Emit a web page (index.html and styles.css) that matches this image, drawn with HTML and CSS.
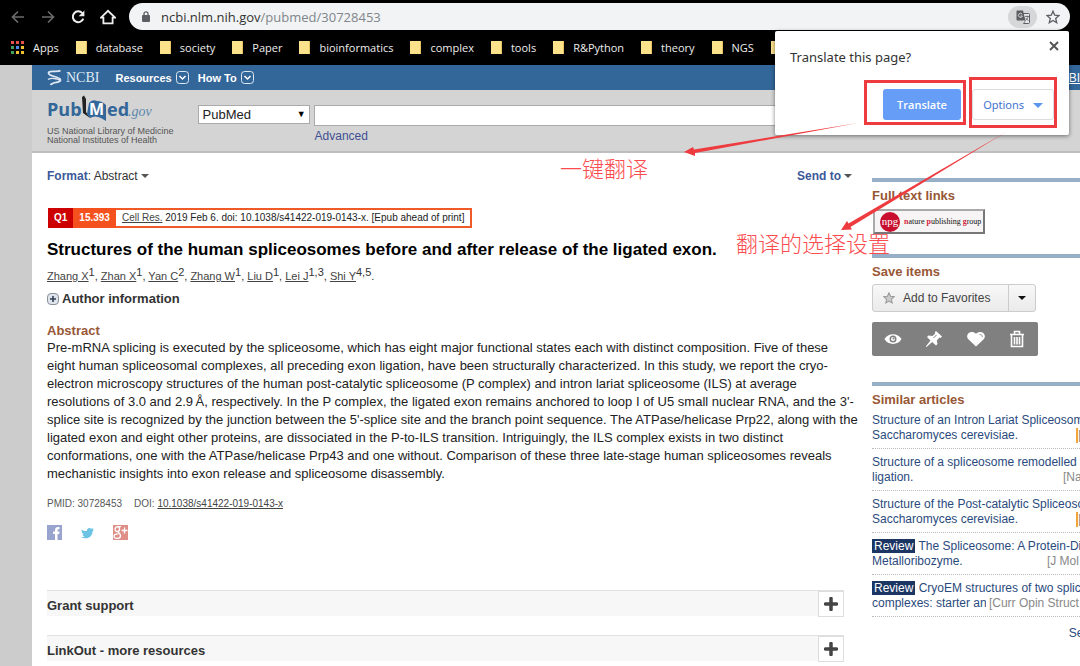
FILE: index.html
```html
<!DOCTYPE html>
<html lang="en">
<head>
    <meta charset="UTF-8">
    <meta name="viewport" content="width=device-width, initial-scale=1.0">
    <title>Structures of the human spliceosomes - PubMed - NCBI</title>
    <link rel="stylesheet" href="styles.css">
</head>
<body>
    <div class="browser">
        <div class="toolbar">
            <button class="tool" aria-label="Back"><svg width="14" height="14" viewBox="0 0 14 14"><path d="M13 7H2M7 1.5L1.5 7L7 12.5" stroke="#6b6b6b" stroke-width="1.7" fill="none"/></svg></button>
            <button class="tool" aria-label="Forward"><svg width="14" height="14" viewBox="0 0 14 14"><path d="M1 7H12M7 1.5L12.5 7L7 12.5" stroke="#6b6b6b" stroke-width="1.7" fill="none"/></svg></button>
            <button class="tool" aria-label="Reload"><svg width="14" height="14" viewBox="0 0 14 14"><path d="M11.3 3.2A5.4 5.4 0 1 0 12.3 8.6" stroke="#eee" stroke-width="2" fill="none"/><path d="M13.4 0.5V6.3H7.6Z" fill="#eee"/></svg></button>
            <button class="tool" aria-label="Home"><svg width="16" height="16" viewBox="0 0 16 16"><path d="M1 8.6L8 1.8L15 8.6H12.6V14.4H3.4V8.6Z" stroke="#eee" stroke-width="1.8" fill="none"/></svg></button>
            <div class="omnibox">
                <svg width="8" height="11" viewBox="0 0 8 11"><rect y="4" width="8" height="7" rx="1" fill="#5a5d61"/><path d="M2 4.500V2.800a2 2 0 0 1 4 0V4.500" stroke="#5a5d61" stroke-width="1.3" fill="none"/></svg>
                <a class="url" href="#"><span>ncbi.nlm.nih.gov</span>/pubmed/30728453</a>
                <button class="translate-icon" aria-label="Translate this page">
                    <svg width="14" height="14" viewBox="0 0 14 14"><path d="M6 3.500H12.500a1 1 0 0 1 1 1V12.500a1 1 0 0 1-1 1H7.500" fill="#e4e6e8" stroke="#5a5d61"/><path d="M1 0.500H7L9.500 10.500H1.500a1 1 0 0 1-1-1V1.500a1 1 0 0 1 .5-1Z" fill="#5a5d61"/><path d="M6.200 4.300A2 2 0 1 0 6.400 6H4.500" stroke="#dadada" fill="none"/><path d="M9 6.500H13M11 5.500V6.500M12.300 6.500Q11.500 9 9.500 10.300M9.800 8Q10.800 9.600 12.500 10.500M7.500 13.500L9.500 10.500" stroke="#5a5d61" stroke-width=".8" fill="none"/></svg>
                </button>
                <button class="star" aria-label="Bookmark this page">
                    <svg width="14" height="14" viewBox="0 0 14 14"><path d="M7 1.200L8.700 5.200L13 5.600L9.700 8.400L10.700 12.700L7 10.400L3.300 12.700L4.300 8.400L1 5.600L5.300 5.200Z" fill="none" stroke="#5a5d61" stroke-width="1.300"/></svg>
                </button>
            </div>
        </div>
        <nav class="bookmarks">
            <a href="#" class="apps">
                <svg width="13" height="13" viewBox="0 0 13 13"><path d="M0 0h3v3H0zM5 0h3v3H5zM10 0h3v3h-3z" fill="#e0524a"/><path d="M0 5h3v3H0z" fill="#3fa35a"/><path d="M5 5h3v3H5z" fill="#4b8bf0"/><path d="M10 5h3v3h-3z" fill="#f1c232"/><path d="M0 10h3v3H0z" fill="#3fa35a"/><path d="M5 10h3v3H5zM10 10h3v3h-3z" fill="#f1c232"/></svg>
                Apps
            </a>
            <a href="#"><i class="folder"></i>database</a>
            <a href="#"><i class="folder"></i>society</a>
            <a href="#"><i class="folder"></i>Paper</a>
            <a href="#"><i class="folder"></i>bioinformatics</a>
            <a href="#"><i class="folder"></i>complex</a>
            <a href="#"><i class="folder"></i>tools</a>
            <a href="#"><i class="folder"></i>R&amp;Python</a>
            <a href="#"><i class="folder"></i>theory</a>
            <a href="#"><i class="folder"></i>NGS</a>
            <a href="#" aria-label="More"><i class="folder"></i></a>
        </nav>
    </div>

    <div class="page">
        <div class="ncbi-bar">
            <a href="#" class="ncbi">
                <svg width="15" height="17" viewBox="0 0 15 17"><path d="M13.500 1.500C10 4 2 .5 1.500 4C1.500 8 13.500 7 13.500 11C13.500 14.500 6 12 3.500 16" stroke="#dfe9f3" stroke-width="1.800" fill="none"/><path d="M1 10.500C4 8.500 10 9.500 13 11" stroke="#dfe9f3" stroke-width="1.500" fill="none"/></svg>
                NCBI
            </a>
            <button class="menu">Resources <svg width="13" height="13" viewBox="0 0 13 13"><rect x=".5" y=".5" width="12" height="12" rx="3" fill="none" stroke="#dfe9f3"/><path d="M3.500 5L6.500 8L9.500 5" stroke="#fff" stroke-width="1.500" fill="none"/></svg></button>
            <button class="menu">How To <svg width="13" height="13" viewBox="0 0 13 13"><rect x=".5" y=".5" width="12" height="12" rx="3" fill="none" stroke="#dfe9f3"/><path d="M3.500 5L6.500 8L9.500 5" stroke="#fff" stroke-width="1.500" fill="none"/></svg></button>
            <a href="#" class="signin">Sign in to NCBI</a>
        </div>

        <header class="header">
            <a href="#" class="logo">
                <svg width="106" height="28" viewBox="0 0 106 28">
                    <path d="M35 2L37 .5L39 4V17L43 23L36 18Z" fill="#222"/>
                    <path d="M40 19L42 8Q45 4 50 6Q55 6 59 10V26L54 23Q48 20 43 23Z" fill="#336699"/>
                    <text x="0" y="21" class="logo-text">Pub</text>
                    <text x="42" y="20" class="logo-m">M</text>
                    <text x="60" y="21" class="logo-text">ed</text>
                    <text x="81" y="21" class="logo-gov">.gov</text>
                </svg>
                <span>US National Library of Medicine</span>
                <span>National Institutes of Health</span>
            </a>
            <form class="search">
                <label class="select-wrap">
                    <select aria-label="Database"><option>PubMed</option></select>
                </label>
                <div class="term">
                    <input type="text" aria-label="Search term">
                    <a href="#">Advanced</a>
                </div>
            </form>
        </header>

        <div class="columns">
            <main class="article">
                <div class="display-bar">
                    <button class="link-button"><span><b>Format</b>: Abstract</span><i class="caret"></i></button>
                    <button class="link-button"><b>Send to</b><i class="caret"></i></button>
                </div>

                <div class="citation">
                    <b class="quartile">Q1</b><b class="factor">15.393</b>
                    <span class="source"><a href="#">Cell Res.</a> 2019 Feb 6. doi: 10.1038/s41422-019-0143-x. [Epub ahead of print]</span>
                </div>

                <h1>Structures of the human spliceosomes before and after release of the ligated exon.</h1>
                <div class="authors"><a href="#">Zhang X</a><sup>1</sup>, <a href="#">Zhan X</a><sup>1</sup>, <a href="#">Yan C</a><sup>2</sup>, <a href="#">Zhang W</a><sup>1</sup>, <a href="#">Liu D</a><sup>1</sup>, <a href="#">Lei J</a><sup>1,3</sup>, <a href="#">Shi Y</a><sup>4,5</sup>.</div>
                <button class="author-info">
                    <svg width="12" height="12" viewBox="0 0 12 12"><rect x=".5" y=".5" width="11" height="11" rx="3.500" fill="#dfe3ea" stroke="#8b929c"/><path d="M6 3V9M3 6H9" stroke="#333f55" stroke-width="1.600"/></svg>
                    Author information
                </button>

                <h2>Abstract</h2>
                <p>Pre-mRNA splicing is executed by the spliceosome, which has eight major functional states each with distinct composition. Five of these<br>
                eight human spliceosomal complexes, all preceding exon ligation, have been structurally characterized. In this study, we report the cryo-<br>
                electron microscopy structures of the human post-catalytic spliceosome (P complex) and intron lariat spliceosome (ILS) at average<br>
                resolutions of 3.0 and 2.9&#8201;Å, respectively. In the P complex, the ligated exon remains anchored to loop I of U5 small nuclear RNA, and the 3'-<br>
                splice site is recognized by the junction between the 5'-splice site and the branch point sequence. The ATPase/helicase Prp22, along with the<br>
                ligated exon and eight other proteins, are dissociated in the P-to-ILS transition. Intriguingly, the ILS complex exists in two distinct<br>
                conformations, one with the ATPase/helicase Prp43 and one without. Comparison of these three late-stage human spliceosomes reveals<br>
                mechanistic insights into exon release and spliceosome disassembly.</p>

                <div class="ids"><span>PMID: 30728453</span><span>DOI: <a href="#">10.1038/s41422-019-0143-x</a></span></div>
                <div class="social">
                    <a href="#" aria-label="Facebook"><svg width="15" height="15" viewBox="0 0 15 15"><path d="M0 0h15v15H0z" fill="#98a4cd"/><path d="M8 15V9H6V6.500H8V5C8 3 9.200 2 11 2H12.500V4.300H11.300C10.700 4.300 10.500 4.700 10.500 5.200V6.500H12.500L12.200 9H10.500V15Z" fill="#fff"/></svg></a>
                    <a href="#" aria-label="Twitter"><svg width="15" height="15" viewBox="0 0 15 15"><path d="M1.500 4.500C3.500 6 5.500 6.300 7 6C6.500 3.500 9.500 2 11.300 3.800L13.500 3.200L12.600 4.800L14 4.700L12.600 6.200C12.500 12 7 15 1 12.200C2.800 12.300 4 11.900 4.600 11.300C3.200 11 2.600 10.200 2.500 9.400L3.600 9.300C2.200 8.500 1.600 7 1.500 4.500Z" fill="#6cc3e3"/></svg></a>
                    <a href="#" aria-label="Google Plus"><svg width="15" height="15" viewBox="0 0 15 15"><path d="M0 0h15v15H0z" fill="#df8f88"/><path d="M8 1.700H4.800C1.500 1.700 1 6.500 4.300 6.500C7.300 6.500 7.200 2.500 5 1.700M4.500 6.500C6 8 7.500 8.500 7.500 10.800C7.500 14.200 1 14.300 1 11.300C1 9.500 3 8.800 5.500 8.800M11.500 2.500V8.500M8.700 5.500H14.500" fill="none" stroke="#fff" stroke-width="1.300"/></svg></a>
                </div>

                <section class="fold">
                    <h3>Grant support</h3>
                    <button aria-label="Show grant support"><svg width="14" height="14" viewBox="0 0 14 14"><path d="M7 1.500V12.500M1.500 7H12.500" stroke="#444" stroke-width="3.500" stroke-linecap="round"/></svg></button>
                </section>
                <section class="fold">
                    <h3>LinkOut - more resources</h3>
                    <button aria-label="Show more resources"><svg width="14" height="14" viewBox="0 0 14 14"><path d="M7 1.500V12.500M1.500 7H12.500" stroke="#444" stroke-width="3.500" stroke-linecap="round"/></svg></button>
                </section>
            </main>

            <aside class="sidebar">
                <section class="portlet">
                    <h3>Full text links</h3>
                    <a href="#" class="npg">
                        <svg width="20" height="20" viewBox="0 0 20 20"><circle cx="10" cy="10" r="10" fill="#c8102e"/><text x="10" y="13" text-anchor="middle" class="npg-mark">npg</text></svg>
                        <span><em>n</em>ature <em>p</em>ublishing <em>g</em>roup</span>
                    </a>
                </section>

                <section class="portlet">
                    <h3>Save items</h3>
                    <div class="favorites">
                        <button><svg width="12" height="12" viewBox="0 0 14 14"><path d="M7 1L8.800 5L13 5.500L9.800 8.400L10.700 12.700L7 10.500L3.300 12.700L4.200 8.400L1 5.500L5.200 5Z" fill="#ccc" stroke="#999" stroke-width="1.200"/></svg>Add to Favorites</button>
                        <button class="drop" aria-label="More collections"><i class="caret"></i></button>
                    </div>
                    <div class="actions">
                        <button aria-label="View"><svg width="18" height="18" viewBox="0 0 18 18"><path d="M.5 9C4 2.500 14 2.500 17.500 9C14 15.500 4 15.500 .5 9Z" fill="#fff"/><circle cx="9" cy="9" r="3.500" fill="#808080"/><circle cx="9" cy="9" r="2" fill="#fff"/><circle cx="9.500" cy="8.500" r="1" fill="#808080"/></svg></button>
                        <button aria-label="Pin"><svg width="18" height="18" viewBox="0 0 18 18"><path d="M11 1L17 6.500L15.500 8L14.500 7.600L11.800 10.500L12.500 14L11 15.500L7.200 12L1.500 17L.8 16.400L5.500 10.500L2 7L3.500 5.500L7.500 6L10.300 3.300L9.800 2.200Z" fill="#fff"/><path d="M8.500 8L11.500 5" stroke="#808080"/></svg></button>
                        <button aria-label="Like"><svg width="18" height="18" viewBox="0 0 18 18"><path d="M9 16.500L1.800 9.800C.6 8.600 0 7.500 .2 5.800C.6 2.200 5.500 .2 9 3.800C12.500 .2 17.400 2.200 17.800 5.800C18 7.500 17.400 8.600 16.200 9.800Z" fill="#fff"/><path d="M12.500 4.200Q15.300 4.200 15.500 7.200" stroke="#999" fill="none"/></svg></button>
                        <button aria-label="Delete"><svg width="18" height="18" viewBox="0 0 18 18"><path d="M2 4.500H16M6.500 4V1.500H11.500V4M3.500 5V16.500H14.500V5M6.500 7V14.500M9 7V14.500M11.500 7V14.500" stroke="#fff" stroke-width="1.600" fill="none"/></svg></button>
                    </div>
                </section>

                <section class="portlet">
                    <h3>Similar articles</h3>
                    <ul>
                        <li>
                            <a href="#">Structure of an Intron Lariat Spliceosome from</a>
                            <div><a href="#">Saccharomyces cerevisiae.</a><span class="free">[Cell. 2017]</span></div>
                        </li>
                        <li>
                            <a href="#">Structure of a spliceosome remodelled for exon</a>
                            <div><a href="#">ligation.</a><span>[Nature. 2017]</span></div>
                        </li>
                        <li>
                            <a href="#">Structure of the Post-catalytic Spliceosome from</a>
                            <div><a href="#">Saccharomyces cerevisiae.</a><span class="free">[Cell. 2017]</span></div>
                        </li>
                        <li>
                            <a href="#"><b>Review</b> The Spliceosome: A Protein-Directed</a>
                            <div><a href="#">Metalloribozyme.</a><span>[J Mol Biol. 2017]</span></div>
                        </li>
                        <li>
                            <a href="#"><b>Review</b> CryoEM structures of two spliceosomal</a>
                            <div><a href="#">complexes: starter and</a><span>[Curr Opin Struct Biol. 2016]</span></div>
                        </li>
                    </ul>
                    <a href="#" class="more">See reviews...</a>
                </section>
            </aside>
        </div>
    </div>

    <div class="popup" role="dialog" aria-label="Translate">
        <button class="close" aria-label="Close"><svg width="10" height="10" viewBox="0 0 10 10"><path d="M1 1L9 9M9 1L1 9" stroke="#555" stroke-width="1.900"/></svg></button>
        <p>Translate this page?</p>
        <div class="popup-buttons">
            <button class="primary">Translate</button>
            <button class="options">Options <i class="caret"></i></button>
        </div>
    </div>

    <svg class="marks" width="1080" height="260" viewBox="0 0 1080 260">
        <g fill="none" stroke="#ee3b3f" stroke-width="3">
            <rect x="865.500" y="81.500" width="99" height="42"/>
            <rect x="970.500" y="78.500" width="85" height="48"/>
        </g>
        <g fill="#ee3b3f">
            <path d="M684 152L693 147L694 149.500L858 123L695 153L695 156Z"/>
            <path d="M841 230L847 221L848.500 223.500L1006 132L850.500 227L852 229.500Z"/>
        </g>
    </svg>
    <div class="note note-translate" lang="zh">一键翻译</div>
    <div class="note note-options" lang="zh">翻译的选择设置</div>
</body>
</html>
```
FILE: styles.css
```css
* {
    box-sizing: border-box;
}

body {
    position: relative;
    margin: 0;
    min-height: 100vh;
    overflow: hidden;
    background-color: #ccc;
    font-family: "Liberation Sans", Arial, sans-serif;
    font-size: 13px;
    color: #333;
}

button {
    padding: 0;
    border: none;
    background: none;
    font: inherit;
    color: inherit;
    cursor: pointer;
}

svg {
    display: block;
    flex: none;
}

h1, h2, h3, p, ul {
    margin: 0;
    padding: 0;
}

.caret {
    display: inline-block;
    border: 4px solid transparent;
    border-top-color: #555;
    border-bottom: none;
}

/* browser chrome */
.browser {
    background-color: #000;
    font-family: "Open Sans", "Noto Sans", sans-serif;
}

.toolbar {
    display: flex;
    align-items: center;
    gap: 14px;
    height: 31px;
    padding: 3px 10px 1px;
}

.tool {
    width: 16px;
    display: flex;
    justify-content: center;
}

.omnibox {
    flex: 1;
    display: flex;
    align-items: center;
    height: 27px;
    margin-left: -1px;
    padding: 0 10px 0 13px;
    border-radius: 14px;
    background-color: #f1f3f4;
}

.url {
    flex: 1;
    margin-left: 11px;
    font-size: 13px;
    color: #80868b;
    text-decoration: none;
}

.url span {
    color: #333;
}

.translate-icon {
    display: flex;
    align-items: center;
    justify-content: center;
    width: 29px;
    height: 22px;
    border-radius: 11px;
    background-color: #d5d7d9;
}

.star {
    margin-left: 9px;
}

.bookmarks {
    display: flex;
    align-items: center;
    gap: 17px;
    height: 34px;
    padding: 0 11px 2px;
    font-size: 11px;
    white-space: nowrap;
}

.bookmarks a {
    display: flex;
    align-items: center;
    gap: 9px;
    color: #eee;
    text-decoration: none;
}

.folder {
    width: 11px;
    height: 13px;
    background-color: #fde28c;
    border-right: 1px solid #e6c35c;
}

/* page */
.page {
    margin-left: 32px;
    background-color: #fff;
}

.ncbi-bar {
    display: flex;
    align-items: center;
    gap: 9px;
    height: 25px;
    padding-left: 15px;
    background-color: #336699;
    color: #fff;
    font-size: 12px;
}

.ncbi {
    display: flex;
    align-items: center;
    gap: 4px;
    margin-right: 7px;
    font-family: "Liberation Serif", serif;
    font-size: 14px;
    color: #dfe9f3;
    text-decoration: none;
}

.menu {
    display: flex;
    align-items: center;
    gap: 4px;
    font-size: 11px;
    font-weight: bold;
}

.signin {
    margin-left: auto;
    color: #fff;
}

.header {
    display: flex;
    gap: 24px;
    height: 63px;
    padding: 5px 40px 0 15px;
    background-color: #d4d4d4;
    border-bottom: 2px solid #bebebe;
}

.logo {
    display: flex;
    flex-direction: column;
    font-size: 9px;
    line-height: 9px;
    color: #555;
    text-decoration: none;
    white-space: nowrap;
}

.logo svg {
    margin-bottom: 4px;
}

.logo-text, .logo-m {
    font: bold 18px "Open Sans", sans-serif;
    fill: #336699;
}

.logo-m {
    font-size: 16px;
    fill: #fff;
}

.logo-gov {
    font: italic 14px "Liberation Serif", serif;
    fill: #5c87ad;
}

.search {
    flex: 1;
    display: flex;
    gap: 4px;
    margin-top: 10px;
}

.select-wrap {
    position: relative;
    height: 19px;
}

.select-wrap::after {
    content: "▼";
    position: absolute;
    right: 4px;
    top: 4px;
    font-size: 9px;
    color: #000;
    pointer-events: none;
}

.select-wrap select {
    appearance: none;
    width: 112px;
    height: 19px;
    padding: 0 4px;
    border: 1px solid #aaa;
    border-radius: 0;
    background-color: #fff;
    font: 13px "Liberation Sans", sans-serif;
    color: #222;
}

.term {
    flex: 1;
    display: flex;
    flex-direction: column;
    gap: 1px;
}

.term input {
    height: 21px;
    border: 1px solid #aaa;
    font: inherit;
}

.term a {
    align-self: flex-start;
    margin-left: 1px;
    font-size: 12px;
    line-height: 18px;
    color: #3f4f93;
    text-decoration: none;
}

/* the right-hand portlets run past a narrow window */
.columns {
    display: grid;
    grid-template-columns: minmax(0, 1fr) 272px;
    gap: 28px;
    margin-right: -64px;
    padding-left: 15px;
    min-height: calc(100vh - 153px);
    background-color: #fff;
}

.display-bar {
    display: flex;
    justify-content: space-between;
    margin-top: 14px;
    font-size: 12px;
}

.display-bar .link-button {
    display: flex;
    align-items: center;
    gap: 3px;
    line-height: 18px;
}

.display-bar .link-button:last-child {
    margin-right: -8px;
}

.link-button b {
    color: #3b5998;
}

.citation {
    display: flex;
    width: fit-content;
    margin: 23px 0 0 1px;
    border: 2px solid #f05a28;
    font-size: 10px;
    line-height: 16px;
}

.quartile, .factor {
    margin: -2px 0;
    padding: 2px 6px;
    background-color: #f4511e;
    color: #fff;
}

.quartile {
    margin-left: -2px;
    background-color: #cc0000;
}

.source {
    padding: 0 6px;
    color: #222;
}

.source a, .authors a, .ids a {
    color: #444;
}

h1 {
    margin-top: 11px;
    font-size: 17px;
    line-height: 22px;
    color: #000;
}

.authors {
    margin-top: 7px;
    font-size: 11px;
    line-height: 16px;
}

.authors sup {
    font-size: 11px;
    line-height: 0;
    vertical-align: 4px;
}

.author-info {
    display: flex;
    align-items: center;
    gap: 3px;
    margin-top: 6px;
    font-weight: bold;
    line-height: 18px;
}

h2 {
    margin-top: 15px;
    font-size: 13px;
    line-height: 16px;
    color: #985735;
}

.article p {
    font-size: 13px;
    line-height: 18px;
    white-space: nowrap;
    color: #222;
}

.ids {
    display: flex;
    gap: 12px;
    margin-top: 14px;
    font-size: 10px;
    line-height: 14px;
    color: #575757;
}

.social {
    display: flex;
    gap: 18px;
    margin: 14px 0 50px;
}

.fold {
    display: flex;
    justify-content: space-between;
    align-items: center;
    height: 26px;
    border-top: 1px solid #e0e0e0;
    background-color: #f7f7f7;
}

.fold + .fold {
    margin-top: 19px;
}

.fold h3 {
    font-size: 13px;
    padding-top: 3px;
}

.fold button {
    display: flex;
    align-items: center;
    justify-content: center;
    width: 26px;
    height: 26px;
    border: 1px solid #ddd;
    background-color: #fff;
}

/* sidebar */
.sidebar {
    margin-top: 25px;
    white-space: nowrap;
}

.portlet {
    border-top: 4px solid #97b0c8;
}

.portlet h3 {
    margin: 6px 0 4px;
    font-size: 13px;
    line-height: 16px;
    color: #985735;
}

.npg {
    display: flex;
    align-items: center;
    gap: 4px;
    width: 112px;
    height: 25px;
    margin: 5px 0 20px 1px;
    padding-left: 5px;
    border: 2px solid #777;
    border-top-color: #aaa;
    border-left-color: #aaa;
    background-color: #f6f4f4;
    font: 8px "Liberation Serif", serif;
    color: #111;
    text-decoration: none;
}

.npg em {
    color: #d5263f;
    font-style: normal;
    font-weight: bold;
}

.npg-mark {
    font: 11px "Liberation Serif", serif;
    fill: #fff;
}

.favorites {
    display: flex;
    width: 164px;
    height: 28px;
    border: 1px solid #ccc;
    border-radius: 3px;
    background: linear-gradient(#f8f8f8, #eaeaea);
    font-size: 12px;
}

.favorites button {
    flex: 1;
    display: flex;
    align-items: center;
    gap: 8px;
    padding-left: 10px;
    color: #444;
}

.favorites .drop {
    flex: none;
    justify-content: center;
    width: 27px;
    padding: 0;
    border-left: 1px solid #ccc;
}

.favorites .caret {
    border-top-color: #111;
}

.actions {
    display: grid;
    grid-template-columns: repeat(4, 1fr);
    width: 166px;
    height: 34px;
    margin: 10px 0 26px;
    border-radius: 2px;
    background-color: #808080;
}

.actions button {
    display: flex;
    align-items: center;
    justify-content: center;
}

.portlet ul {
    padding-top: 1px;
    list-style: none;
    font-size: 12px;
    line-height: 15px;
}

.portlet li {
    padding-bottom: 5px;
    margin-bottom: 6px;
    border-bottom: 1px dotted #bbb;
}

.portlet li a, .more {
    color: #2a4a7d;
    text-decoration: none;
}

.portlet li > a {
    display: block;
}

.portlet li div {
    display: flex;
    justify-content: space-between;
    padding-right: 5px;
}

.portlet li div a {
    overflow: hidden;
}

.portlet li span {
    padding-left: 3px;
    color: #888;
}

.portlet li .free {
    padding-left: 0;
    border-left: 2px solid #f0a43a;
}

.portlet li b {
    padding: 0 2px;
    background-color: #1c3664;
    color: #fff;
    font-weight: normal;
}

.more {
    display: block;
    padding-top: 3px;
    text-align: right;
    font-size: 12px;
}

/* translate popup */
.popup {
    position: absolute;
    top: 31px;
    right: 11px;
    width: 294px;
    height: 104px;
    padding: 16px 15px 15px;
    border-radius: 2px;
    background-color: #fff;
    box-shadow: 0 1px 4px rgba(0, 0, 0, 0.5);
    font-family: "Noto Sans", "Open Sans", sans-serif;
}

.popup p {
    font-size: 13px;
    line-height: 20px;
}

.popup .close {
    position: absolute;
    top: 10px;
    right: 10px;
}

.popup-buttons {
    display: flex;
    justify-content: flex-end;
    gap: 11px;
    margin-top: 22px;
    font-size: 11px;
}

.popup-buttons button {
    width: 82px;
    height: 31px;
    border-radius: 3px;
}

.popup-buttons .primary {
    width: 78px;
    background-color: #669df6;
    color: #fff;
    font-family: "Open Sans", sans-serif;
    font-weight: 600;
}

.popup-buttons .options {
    border: 1px solid #dadce0;
    color: #3f73d0;
}

.popup-buttons .caret {
    margin-left: 6px;
    border-width: 5px;
    border-bottom: none;
    border-top-color: #5a95ee;
    vertical-align: 1px;
}

/* hand-drawn notes over the page */
.marks {
    position: absolute;
    top: 0;
    left: 0;
    pointer-events: none;
}

.note {
    position: absolute;
    font-family: "Noto Sans CJK SC", sans-serif;
    font-size: 22px;
    font-weight: 300;
    line-height: 26px;
    color: #fb4b4e;
    white-space: nowrap;
}

.note-translate {
    top: 154px;
    left: 560px;
}

.note-options {
    top: 229px;
    left: 736px;
}
```
